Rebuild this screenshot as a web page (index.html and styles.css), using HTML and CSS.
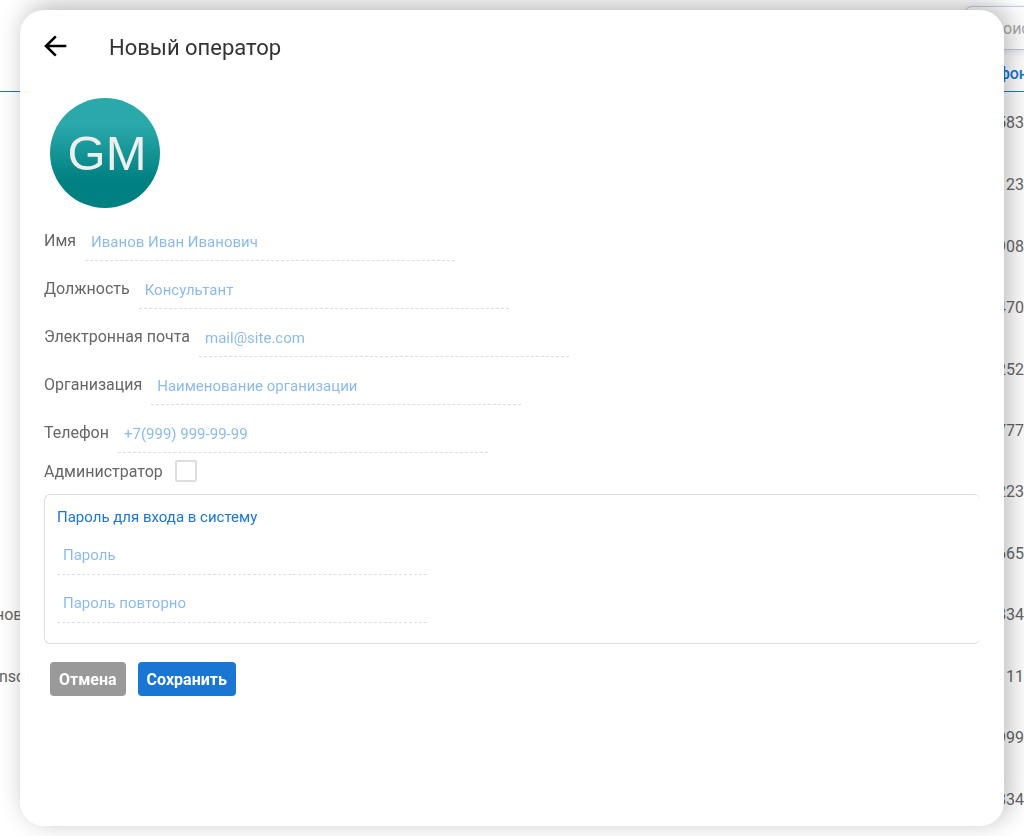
FILE: index.html
```html
<!DOCTYPE html>
<html lang="ru">
<head>
  <meta charset="UTF-8">
  <meta name="viewport" content="width=device-width, initial-scale=1">
  <title>Новый оператор</title>
  <link rel="stylesheet" href="styles.css">
</head>
<body>
  <!-- Список операторов под окном -->
  <main class="page">
    <div class="toolbar">
      <input class="search" type="search" placeholder="оиск" aria-label="Поиск">
    </div>
    <table class="operators">
      <thead>
        <tr><th></th><th class="phone"><span>фон</span></th></tr>
      </thead>
      <tbody>
        <tr><td></td><td class="phone">583</td></tr>
        <tr><td></td><td class="phone">123</td></tr>
        <tr><td></td><td class="phone">908</td></tr>
        <tr><td></td><td class="phone">470</td></tr>
        <tr><td></td><td class="phone">252</td></tr>
        <tr><td></td><td class="phone">777</td></tr>
        <tr><td></td><td class="phone">223</td></tr>
        <tr><td></td><td class="phone">665</td></tr>
        <tr><td>нов</td><td class="phone">834</td></tr>
        <tr><td>insc</td><td class="phone">11</td></tr>
        <tr><td></td><td class="phone">999</td></tr>
        <tr><td></td><td class="phone">834</td></tr>
      </tbody>
    </table>
  </main>

  <!-- Окно нового оператора -->
  <section class="modal" role="dialog" aria-labelledby="modal-title">
    <header class="modal-header">
      <button class="back" type="button" aria-label="Назад">
        <svg width="24" height="24" viewBox="0 0 24 24" fill="none" stroke="#000" stroke-width="2.6">
          <path d="M22.300 11H2.500M11.800 1.300L2 11l9.800 9.700"/>
        </svg>
      </button>
      <h1 id="modal-title">Новый оператор</h1>
    </header>

    <div class="avatar">GM</div>

    <form>
      <div class="field">
        <label for="name">Имя</label>
        <input id="name" type="text" placeholder="Иванов Иван Иванович">
      </div>
      <div class="field">
        <label for="position">Должность</label>
        <input id="position" type="text" placeholder="Консультант">
      </div>
      <div class="field">
        <label for="email">Электронная почта</label>
        <input id="email" type="email" placeholder="mail@site.com">
      </div>
      <div class="field">
        <label for="organization">Организация</label>
        <input id="organization" type="text" placeholder="Наименование организации">
      </div>
      <div class="field">
        <label for="phone">Телефон</label>
        <input id="phone" type="tel" placeholder="+7(999) 999-99-99">
      </div>
      <div class="check">
        <label for="admin">Администратор</label>
        <input id="admin" type="checkbox">
      </div>

      <div class="password-box" role="group" aria-labelledby="password-title">
        <h2 id="password-title">Пароль для входа в систему</h2>
        <input type="password" placeholder="Пароль" aria-label="Пароль">
        <input type="password" placeholder="Пароль повторно" aria-label="Пароль повторно">
      </div>

      <div class="buttons">
        <button class="btn cancel" type="button">Отмена</button>
        <button class="btn save" type="submit">Сохранить</button>
      </div>
    </form>
  </section>
</body>
</html>
```
FILE: styles.css
```css
* {
  margin: 0;
  padding: 0;
  box-sizing: border-box;
}
body {
  font-family: Roboto, sans-serif;
  font-size: 16px;
  color: #666;
  background: #fff;
  overflow: hidden;
}

/* Страница со списком */
.page {
  margin-left: -5px;
  height: 100vh;
  overflow: hidden;
}
.toolbar {
  display: flex;
  justify-content: flex-end;
  padding-top: 6px;
  margin-right: -80px;
}
.search {
  width: 140px;
  height: 44px;
  padding-left: 38px;
  border: 1px solid #c5cde0;
  border-radius: 8px;
  background: #fff;
  box-shadow: 0 2px 6px #dfe3f0;
  font: inherit;
}
.search::placeholder {
  color: #aaa;
}
.operators {
  width: 100%;
  height: calc(100vh - 56px);
  border-collapse: collapse;
}
.operators th {
  height: 41px;
  padding-top: 6px;
  color: #1976d2;
  font-weight: 500;
  border-bottom: 1px solid #1976d2;
}
.operators th span {
  margin-right: -4px;
}
.operators .phone {
  text-align: right;
}

/* Окно */
.modal {
  position: fixed;
  inset: 10px 20px;
  padding: 24px;
  background: #fff;
  border-radius: 24px;
  box-shadow: 5px -5px 26px rgba(0, 0, 0, 0.28);
  overflow: auto;
}
.modal-header {
  display: flex;
  align-items: center;
  gap: 41px;
  height: 26px;
}
.modal-header h1 {
  font-size: 22px;
  font-weight: 400;
  color: #333;
}
.back {
  width: 24px;
  height: 24px;
  border: none;
  background: none;
  cursor: pointer;
}
.back svg {
  display: block;
}
.avatar {
  display: flex;
  align-items: center;
  justify-content: center;
  width: 110px;
  height: 110px;
  margin: 38px 0 5px 6px;
  padding-left: 4px;
  border-radius: 50%;
  background: linear-gradient(#2aa8aa 25%, #008080 75%);
  color: #eee;
  font-family: "Liberation Sans", sans-serif;
  font-size: 49px;
}

/* Поля формы */
.field {
  display: flex;
  align-items: flex-end;
  gap: 9px;
  height: 48px;
}
.field label {
  line-height: 40px;
}
.field input,
.password-box input {
  display: block;
  width: 370px;
  height: 38px;
  padding: 0 6px;
  border: none;
  border-bottom: 1px dashed #dcdcea;
  background: none;
  color: #1976d2;
  font: 15px Roboto, sans-serif;
}
.field input::placeholder,
.password-box input::placeholder {
  color: #1976d2;
  opacity: 0.5;
}
.check {
  display: flex;
  align-items: center;
  gap: 12px;
  height: 36px;
}
.check input {
  appearance: none;
  width: 22px;
  height: 22px;
  border: 2px solid #ddd;
  border-radius: 2px;
  background: #fff;
}
.check input:checked {
  background: #1976d2;
}

/* Пароль */
.password-box {
  margin-top: 5px;
  padding: 12px 12px 20px;
  border: 1px solid #dcdcea;
  border-right: none;
  border-radius: 6px;
}
.password-box h2 {
  font-size: 15px;
  font-weight: 400;
  line-height: 20px;
  color: #1976d2;
}
.password-box input {
  margin-top: 10px;
  padding-bottom: 2px;
}

/* Кнопки */
.buttons {
  display: flex;
  gap: 12px;
  margin: 18px 6px 0;
}
.btn {
  height: 34px;
  padding: 0 9px;
  border: none;
  border-radius: 4px;
  color: #fff;
  font: bold 16px Roboto, sans-serif;
  cursor: pointer;
}
.cancel {
  background: #999;
}
.save {
  background: #1976d2;
}
```
